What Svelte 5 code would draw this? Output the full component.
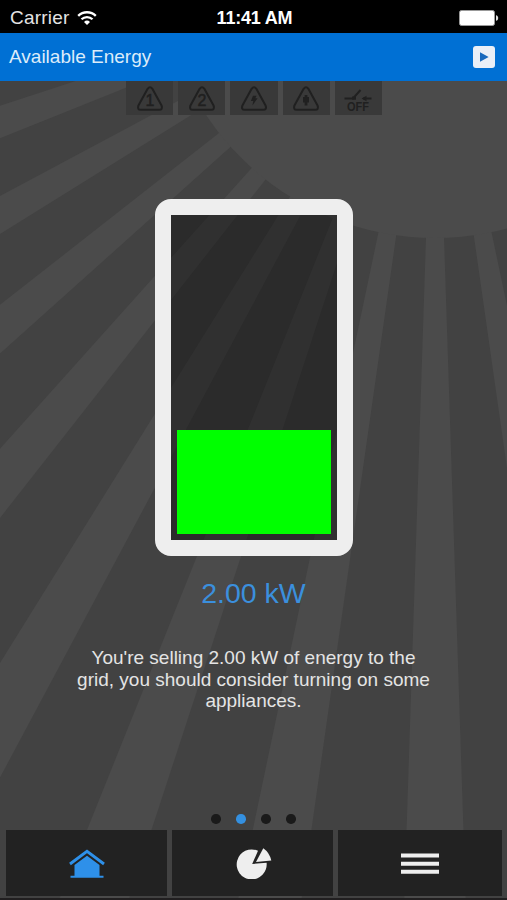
<script>
    let tab = $state('home');
    let page = $state(1);

    const pages = [0, 1, 2, 3];
    const alerts = ['one', 'two', 'bolt', 'plug', 'off'];
    const tabs = ['home', 'stats', 'menu'];

    const power = 2;
    const level = 33.3;

    // sun in the background: rays start at its centre, one every 10 degrees
    const sun = { x: 435, y: -36.5, r: 274.5 };
    const rays = [-20, -10, 0, 10, 20, 30, 40, 50, 60, 70, 80];

    function rayPoints(angle) {
        const point = (deg) => {
            const rad = (deg * Math.PI) / 180;
            return `${sun.x - Math.sin(rad) * 1400},${sun.y + Math.cos(rad) * 1400}`;
        };
        return `${sun.x},${sun.y} ${point(angle - 1.88)} ${point(angle + 1.88)}`;
    }
</script>

<div class="app">
    <svg class="sunrays" width="507" height="900" viewBox="0 0 507 900">
        {#each rays as angle}
            <polygon points={rayPoints(angle)} />
        {/each}
        <circle cx={sun.x} cy={sun.y} r={sun.r} />
    </svg>

    <div class="status-bar">
        <div class="carrier">
            Carrier
            <svg width="20" height="16" viewBox="0 0 20 16" fill="none" stroke="#fff" stroke-width="2.3">
                <path d="M1.2 5.9a12.4 12.4 0 0 1 17.6 0" />
                <path d="M4.5 9.3a7.8 7.8 0 0 1 11 0" />
                <path d="M10 15l-3-3a4.3 4.3 0 0 1 6 0z" fill="#fff" stroke="none" />
            </svg>
        </div>
        <div class="time">11:41 AM</div>
        <div class="phone-battery">
            <svg width="40" height="16" viewBox="0 0 40 16">
                <rect x="0.5" y="0.5" width="35" height="15" rx="2" fill="#fff" stroke="#999" />
                <path d="M37 5.2c1.4.2 2.2 1.3 2.2 2.8s-.8 2.6-2.2 2.8z" fill="#ddd" />
            </svg>
        </div>
    </div>

    <header>
        <h1>Available Energy</h1>
        <button class="play" aria-label="Play">
            <svg width="22" height="22" viewBox="0 0 22 22">
                <path d="M7 6.2l8.6 4.8L7 15.8z" fill="#1769bd" />
            </svg>
        </button>
    </header>

    <div class="alerts">
        {#each alerts as alert}
            <div class="alert">
                {#if alert === 'off'}
                    <svg width="30" height="28" viewBox="0 0 30 28">
                        <path d="M1.5 13.5h8.5l7.5-8.5M20 13.5h8.5" fill="none" stroke="#202020" stroke-width="2" />
                        <path d="M18.5 13.5l5-2.8v5.6zM9 11.5h4v3.2H9z" fill="#202020" />
                        <text class="off" x="15" y="26" textLength="22" lengthAdjust="spacingAndGlyphs">OFF</text>
                    </svg>
                {:else}
                    <svg width="30" height="28" viewBox="0 0 30 28">
                        <path d="M12.6 3.8q2.4-3 4.8 0l9.2 16.8q1.4 4-2.4 4.2H5.8q-3.8-.2-2.4-4.2z" fill="none" stroke="#202020" stroke-width="2.1" />
                        {#if alert === 'one'}
                            <text x="15" y="21.2">1</text>
                        {:else if alert === 'two'}
                            <text x="15" y="21.2">2</text>
                        {:else if alert === 'bolt'}
                            <path d="M14 10.7h3.6l-1.3 2.6h2.3l-5.2 7.2.9-4.4h-2.4z" fill="#202020" />
                        {:else}
                            <path d="M13.6 10h2.8v2h1.6v5.6h-1.6v3h-2.8v-3H12V12h1.6z" fill="#202020" />
                        {/if}
                    </svg>
                {/if}
            </div>
        {/each}
    </div>

    <main>
        <div class="battery">
            <div class="level" style="height: {level}%"></div>
        </div>
        <div class="power">{power.toFixed(2)} kW</div>
        <p>
            You're selling {power.toFixed(2)} kW of energy to the<br />
            grid, you should consider turning on some<br />
            appliances.
        </p>
    </main>

    <div class="dots">
        {#each pages as i}
            <button class="dot" class:active={page === i} aria-label="Page {i + 1}" onclick={() => (page = i)}></button>
        {/each}
    </div>

    <nav>
        {#each tabs as name}
            <button class="tab" class:selected={tab === name} aria-label={name} onclick={() => (tab = name)}>
                {#if name === 'home'}
                    <svg width="38" height="32" viewBox="0 0 38 32" fill="currentColor">
                        <path d="M2 17L19 4.4 36 17" fill="none" stroke="currentColor" stroke-width="2.9" />
                        <path d="M19 8.8l12.5 9.2V28.8H35.5v2H2.5v-2h4V18z" />
                    </svg>
                {:else if name === 'stats'}
                    <svg width="38" height="32" viewBox="0 0 38 32" fill="currentColor">
                        <path d="M18.2 17L24 3.8A15 15 0 1 0 32.6 15.8z" />
                        <path d="M22 14.9L29.3 1.2Q35.4 5.4 37.3 13.4z" />
                    </svg>
                {:else}
                    <svg width="38" height="32" viewBox="0 0 38 32" fill="currentColor">
                        <path d="M0 6.6h38v4H0zM0 14.7h38v4H0zM0 22.8h38v4H0z" />
                    </svg>
                {/if}
            </button>
        {/each}
    </nav>
</div>

<style>
    :global(body) {
        margin: 0;
        background: #424242;
    }

    .app {
        position: relative;
        display: flex;
        flex-direction: column;
        width: 507px;
        height: 900px;
        overflow: hidden;
        box-sizing: border-box;
        border-bottom: 2px solid #211f20;
        background: #424242;
        font-family: "Liberation Sans", Arial, sans-serif;
        color: #e4e4e4;
    }

    .sunrays {
        position: absolute;
        top: 0;
        left: 0;
        fill: #4b4b4b;
    }

    .status-bar, header, .alerts, main, .dots, nav {
        position: relative;
        flex: none;
    }

    button {
        padding: 0;
        border: 0;
        cursor: pointer;
    }

    .status-bar {
        display: grid;
        grid-template-columns: 1fr auto 1fr;
        align-items: center;
        height: 33px;
        padding: 3px 8px 0 10px;
        box-sizing: border-box;
        background: #000;
        font-size: 19px;
    }

    .carrier {
        display: flex;
        align-items: center;
        gap: 8px;
        letter-spacing: 0.2px;
    }

    .time {
        font-weight: bold;
        font-size: 18px;
        letter-spacing: -0.2px;
        color: #fff;
    }

    .phone-battery {
        display: flex;
        justify-content: flex-end;
    }

    header {
        display: flex;
        align-items: center;
        justify-content: space-between;
        height: 48px;
        padding: 0 12px 0 9px;
        box-sizing: border-box;
        background: #0070d4;
    }

    h1 {
        margin: 0;
        font-size: 19px;
        font-weight: normal;
        color: #dcecfa;
    }

    .play {
        display: flex;
        border-radius: 3px;
        background: #e9eff7;
    }

    .alerts {
        display: flex;
        justify-content: center;
        gap: 5px;
        height: 34px;
        padding-left: 1px;
    }

    .alert {
        display: flex;
        align-items: center;
        justify-content: center;
        width: 47.2px;
        padding-top: 2px;
        box-sizing: border-box;
        background: #393939;
    }

    .alert text {
        font-size: 16px;
        text-anchor: middle;
        fill: #202020;
        stroke: #202020;
        stroke-width: 0.5px;
    }

    .alert .off {
        font-size: 12px;
        font-weight: bold;
        stroke: none;
    }

    main {
        display: flex;
        flex-direction: column;
        align-items: center;
        height: 698px;
        padding-top: 84px;
        box-sizing: border-box;
    }

    .battery {
        display: flex;
        flex: none;
        flex-direction: column;
        justify-content: flex-end;
        width: 198px;
        height: 357px;
        padding: 6px;
        box-sizing: border-box;
        border: 16px solid #eee;
        border-radius: 16px;
        background: rgba(0, 0, 0, 0.35);
        background-clip: padding-box;
    }

    .level {
        background: #00ff00;
    }

    .power {
        margin-top: 20px;
        font-size: 28.5px;
        line-height: 34px;
        color: #3b8fdd;
    }

    p {
        margin: 37px 0 0;
        font-size: 19px;
        line-height: 21.6px;
        text-align: center;
        white-space: nowrap;
    }

    .dots {
        display: flex;
        justify-content: center;
        gap: 15.6px;
        height: 17px;
        padding-top: 1px;
        box-sizing: border-box;
    }

    .dot {
        width: 9.6px;
        height: 9.6px;
        border-radius: 50%;
        background: #1a1a1a;
    }

    .dot.active {
        background: #3490e0;
    }

    nav {
        display: grid;
        grid-template-columns: 161px 161px 164px;
        gap: 5px;
        height: 66px;
        padding-left: 6px;
    }

    .tab {
        display: flex;
        align-items: center;
        justify-content: center;
        background: #222;
        color: #eee;
    }

    .tab.selected {
        color: #2e90e9;
    }
</style>
